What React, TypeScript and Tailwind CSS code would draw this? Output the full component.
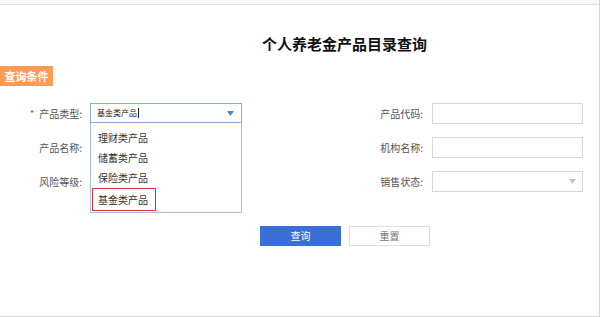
import { useState } from 'react';

const productTypes = ['理财类产品', '储蓄类产品', '保险类产品', '基金类产品'];

function Label({ text, required }: { text: string; required?: boolean }) {
    return (
        <label className="flex items-center justify-end text-[10px] text-[#555] leading-[21px]">
            {required && <span className="mr-[5px] text-[9px] text-[#e0322b]">*</span>}
            {text}:
        </label>
    );
}

function Arrow({ color }: { color: string }) {
    return (
        <svg width="7" height="5" viewBox="0 0 7 5" className="shrink-0">
            <path d="M0 0H7L3.5 5Z" fill={color} />
        </svg>
    );
}

export default function App() {
    const [selected] = useState('基金类产品');

    return (
        <div className="relative h-[317px] w-[600px] overflow-hidden border-r border-b border-[#d4d4d4] bg-white font-['Noto_Sans_CJK_SC',sans-serif]">
            {/* Top strip */}
            <div className="h-[5px] border-b border-[#e2e2e2] bg-[#f7f7f7]" />

            {/* Title */}
            <h1 className="mt-[29px] pl-[90px] text-center text-[15px] font-bold leading-[20px] text-[#111]">
                个人养老金产品目录查询
            </h1>

            {/* Section tag */}
            <div className="mt-[12px] h-[20px] w-[53px] bg-[#ff9a57] text-center text-[11px] font-bold leading-[20px] text-white">
                查询条件
            </div>

            {/* Form */}
            <div className="mt-[17px] flex flex-col gap-[13px]">
                <div className="flex h-[21px]">
                    <div className="w-[82px]">
                        <Label text="产品类型" required />
                    </div>
                    <div className="relative ml-[8px] w-[152px]">
                        <div className="flex h-[20px] items-center justify-between border border-[#86a9e8] bg-white pl-[6px] pr-[7px]">
                            <span className="flex items-center text-[8px] text-[#222]">
                                {selected}
                                <span className="ml-[1px] inline-block h-[10px] w-px bg-[#222]" />
                            </span>
                            <Arrow color="#4a86de" />
                        </div>
                        {/* Dropdown */}
                        <div className="absolute top-[20px] left-0 z-10 w-[152px] border border-t-0 border-[#a9c0ea] bg-white pt-[5px] pb-[1px]">
                            {productTypes.map((p, i) =>
                                i === productTypes.length - 1 ? (
                                    <div
                                        key={p}
                                        className="ml-px h-[23px] w-[64px] border border-[#e53030] pl-[5px] text-[10px] leading-[21px] text-[#333]"
                                    >
                                        {p}
                                    </div>
                                ) : (
                                    <div key={p} className="h-[20px] pl-[7px] text-[10px] leading-[20px] text-[#333]">
                                        {p}
                                    </div>
                                )
                            )}
                        </div>
                    </div>
                    <div className="w-[181px]">
                        <Label text="产品代码" />
                    </div>
                    <div className="ml-[9px] h-[21px] w-[151px] border border-[#d9d9d9]" />
                </div>

                <div className="flex h-[21px]">
                    <div className="w-[82px]">
                        <Label text="产品名称" />
                    </div>
                    <div className="ml-[8px] h-[21px] w-[152px] border border-[#d9d9d9]" />
                    <div className="w-[181px]">
                        <Label text="机构名称" />
                    </div>
                    <div className="ml-[9px] h-[21px] w-[151px] border border-[#d9d9d9]" />
                </div>

                <div className="flex h-[21px]">
                    <div className="w-[82px]">
                        <Label text="风险等级" />
                    </div>
                    <div className="ml-[8px] h-[21px] w-[152px] border border-[#d9d9d9]" />
                    <div className="w-[181px]">
                        <Label text="销售状态" />
                    </div>
                    <div className="ml-[9px] flex h-[21px] w-[151px] items-center justify-end border border-[#d9d9d9] pr-[6px]">
                        <Arrow color="#c4c4c4" />
                    </div>
                </div>
            </div>

            {/* Actions */}
            <div className="mt-[34px] flex gap-[8px] pl-[260px]">
                <button className="h-[20px] w-[81px] bg-[#3a6fd8] text-[10px] leading-[20px] text-white">
                    查询
                </button>
                <button className="h-[20px] w-[81px] border border-[#dedede] bg-white text-[10px] leading-[18px] text-[#777]">
                    重置
                </button>
            </div>
        </div>
    );
}
